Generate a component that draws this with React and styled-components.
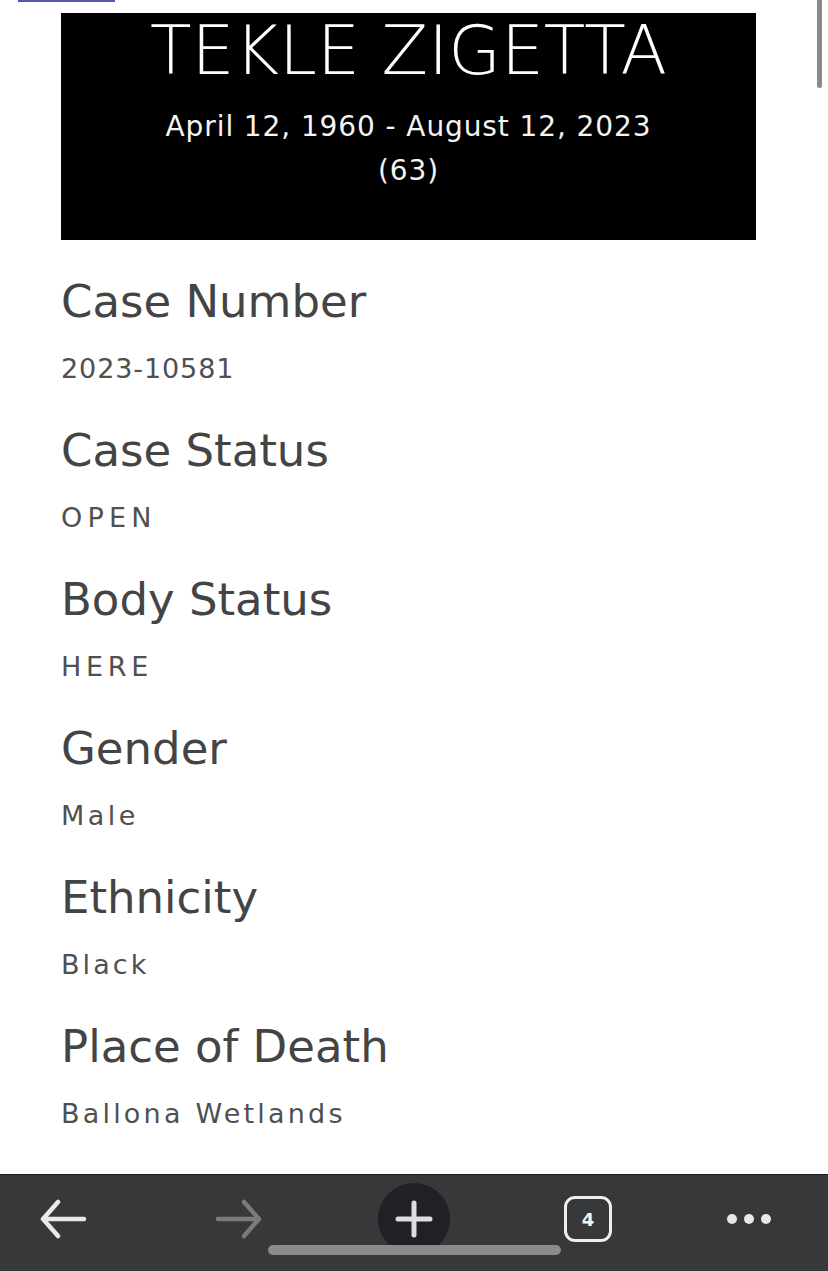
import React from "react";
import styled, { createGlobalStyle } from "styled-components";

const Global = createGlobalStyle`
  html, body { margin: 0; padding: 0; background: #ffffff; }
  body { font-family: "DejaVu Sans", "Open Sans", sans-serif; }
  * { box-sizing: border-box; }
`;

const Page = styled.div`
  position: relative;
  min-height: 100vh;
  display: flex;
  flex-direction: column;
  background: #ffffff;
  overflow: hidden;
`;

const TopRule = styled.div`
  width: 97px;
  height: 2px;
  margin-left: 18px;
  background: #5457b6;
`;

const Column = styled.main`
  width: 695px;
  margin-left: 61px;
  display: flex;
  flex-direction: column;
`;

const Banner = styled.header`
  margin-top: 11px;
  height: 227px;
  background: #000000;
  color: #ffffff;
  display: flex;
  flex-direction: column;
  align-items: center;
  text-align: center;
`;

const Name = styled.h1`
  margin: 0;
  font-family: "DejaVu Sans", sans-serif;
  font-weight: 200;
  font-size: 68px;
  line-height: 76px;
  letter-spacing: 0px;
`;

const Dates = styled.p`
  margin: 16px 0 0;
  font-family: "DejaVu Sans", sans-serif;
  font-weight: 400;
  font-size: 28px;
  line-height: 44px;
  letter-spacing: 0.9px;
  color: #f4f4f4;
`;

const Fields = styled.dl`
  margin: 32px 0 0;
  display: flex;
  flex-direction: column;
  gap: 32px;
`;

const Field = styled.div`
  display: flex;
  flex-direction: column;
  gap: 17px;
`;

const Label = styled.dt`
  margin: 0;
  font-family: "DejaVu Sans", sans-serif;
  font-weight: 400;
  font-size: 45px;
  line-height: 60px;
  color: #444444;
`;

const Value = styled.dd`
  margin: 0;
  font-family: "DejaVu Sans", sans-serif;
  font-weight: 400;
  font-size: 27px;
  line-height: 40px;
  letter-spacing: ${(p) => p.$spacing}px;
  color: #505050;
`;

const Scrollbar = styled.div`
  position: absolute;
  top: 0;
  right: 6px;
  width: 5px;
  height: 88px;
  border-radius: 0 0 3px 3px;
  background: #8a8a8a;
`;

const Toolbar = styled.nav`
  position: relative;
  margin-top: auto;
  height: 97px;
  background: #37383a;
  border-top: 1px solid #1f1f20;
  padding-top: 8px;
  display: flex;
  align-items: flex-start;
`;

const Slot = styled.div`
  width: ${(p) => p.$w}px;
  height: 72px;
  display: flex;
  align-items: center;
  justify-content: center;
  flex-shrink: 0;
`;

const NewTab = styled.div`
  width: 72px;
  height: 72px;
  border-radius: 50%;
  background: #202124;
  display: flex;
  align-items: center;
  justify-content: center;
`;

const TabCount = styled.div`
  width: 48px;
  height: 46px;
  border: 3px solid #efeff0;
  border-radius: 11px;
  display: flex;
  align-items: center;
  justify-content: center;
  color: #f2f2f2;
  font-family: "DejaVu Sans", sans-serif;
  font-weight: 700;
  font-size: 18px;
`;

const Dots = styled.div`
  display: flex;
  gap: 7px;
`;

const Dot = styled.span`
  width: 10px;
  height: 10px;
  border-radius: 50%;
  background: #e8e8ea;
`;

const HomeIndicator = styled.div`
  position: absolute;
  left: 268px;
  top: 70px;
  width: 293px;
  height: 10px;
  border-radius: 5px;
  background: #8b8b8b;
`;

const Arrow = ({ dir, color }) => (
  <svg width="48" height="40" viewBox="0 0 48 40" fill="none"
    style={dir === "right" ? { transform: "scaleX(-1)" } : undefined}>
    <path d="M4 20 H45 M19 3 L4 20 L19 37" stroke={color} strokeWidth="4.5"
      strokeLinecap="round" strokeLinejoin="round" />
  </svg>
);

const Plus = () => (
  <svg width="38" height="38" viewBox="0 0 38 38" fill="none">
    <path d="M19 3 V35 M3 19 H35" stroke="#dedee0" strokeWidth="5" strokeLinecap="round" />
  </svg>
);

const fields = [
  { label: "Case Number", value: "2023-10581", spacing: 0.9 },
  { label: "Case Status", value: "OPEN", spacing: 5.2 },
  { label: "Body Status", value: "HERE", spacing: 4.7 },
  { label: "Gender", value: "Male", spacing: 3.5 },
  { label: "Ethnicity", value: "Black", spacing: 3.1 },
  { label: "Place of Death", value: "Ballona Wetlands", spacing: 3.2 },
];

export default function App() {
  return (
    <>
      <Global />
      <Page>
        <TopRule />
        <Column>
          <Banner>
            <Name>TEKLE ZIGETTA</Name>
            <Dates>
              April 12, 1960 - August 12, 2023
              <br />
              (63)
            </Dates>
          </Banner>
          <Fields>
            {fields.map((f) => (
              <Field key={f.label}>
                <Label>{f.label}</Label>
                <Value $spacing={f.spacing}>{f.value}</Value>
              </Field>
            ))}
          </Fields>
        </Column>
        <Scrollbar />
        <Toolbar>
          <Slot $w={126}><Arrow dir="left" color="#e9e9eb" /></Slot>
          <Slot $w={226}><Arrow dir="right" color="#7b7b7d" /></Slot>
          <Slot $w={124}><NewTab><Plus /></NewTab></Slot>
          <Slot $w={224}><TabCount>4</TabCount></Slot>
          <Slot $w={98}><Dots><Dot /><Dot /><Dot /></Dots></Slot>
          <HomeIndicator />
        </Toolbar>
      </Page>
    </>
  );
}
